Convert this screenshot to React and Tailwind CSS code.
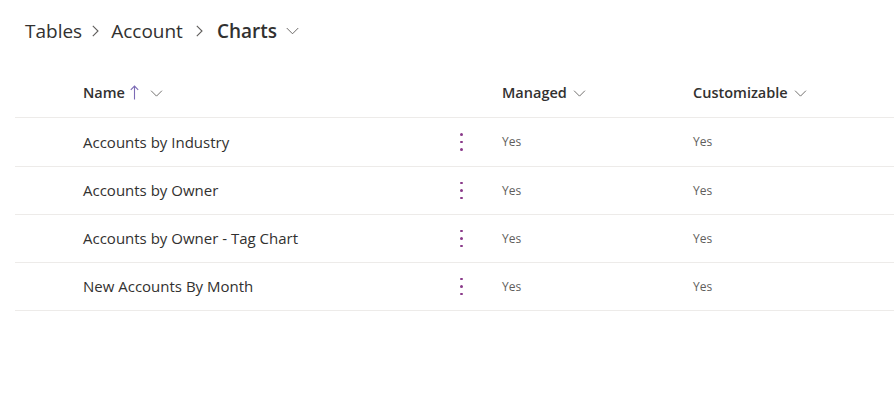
import React from 'react';

const rows = [
  'Accounts by Industry',
  'Accounts by Owner',
  'Accounts by Owner - Tag Chart',
  'New Accounts By Month',
];

const Chevron = ({ className = '' }) => (
  <svg viewBox="0 0 14 8" className={className} fill="none" stroke="currentColor" strokeWidth="1">
    <path d="M0.8 0.8 L7 7 L13.2 0.8" />
  </svg>
);

const ChevronRight = ({ className = '' }) => (
  <svg viewBox="0 0 7 12" className={className} fill="none" stroke="currentColor" strokeWidth="1.1">
    <path d="M0.8 0.8 L6 6 L0.8 11.2" />
  </svg>
);

const SortUp = () => (
  <svg viewBox="0 0 9 15" className="w-[9px] h-[15px] text-[#7c6bb5]" fill="none" stroke="currentColor" strokeWidth="1.1">
    <path d="M4.5 1 V14.5 M0.8 4.8 L4.5 1 L8.2 4.8" />
  </svg>
);

const MoreDots = () => (
  <div className="flex flex-col items-center w-[3px] gap-[5px]">
    <span className="w-[2.5px] h-[2.5px] bg-[#8a3a8a] rounded-full" />
    <span className="w-[2.5px] h-[2.5px] bg-[#8a3a8a] rounded-full" />
    <span className="w-[2.5px] h-[2.5px] bg-[#8a3a8a] rounded-full" />
  </div>
);

export default function App() {
  return (
    <div className="w-[894px] h-[401px] bg-white text-[#323130] font-['Segoe_UI','Open_Sans',sans-serif] overflow-hidden">
      {/* Breadcrumb */}
      <div className="flex items-center h-[40px] mt-[11px] pl-[25px] text-[19px] leading-none">
        <span>Tables</span>
        <ChevronRight className="w-[7px] h-[12px] ml-[10px] mr-[12px] text-[#605e5c]" />
        <span>Account</span>
        <ChevronRight className="w-[7px] h-[12px] ml-[13px] mr-[14px] text-[#605e5c]" />
        <span className="font-semibold">Charts</span>
        <Chevron className="w-[13px] h-[8px] ml-[9px] text-[#605e5c]" />
      </div>

      {/* Table */}
      <div className="ml-[15px] mt-[18px]">
        <div className="flex items-center h-[49px] border-b border-[#edebe9] text-[14.5px] font-semibold">
          <div className="w-[432px] pl-[68px] flex items-center">
            <span>Name</span>
            <span className="ml-[5px] mt-[-1px]">
              <SortUp />
            </span>
            <Chevron className="w-[13px] h-[7px] ml-[11px] text-[#605e5c]" />
          </div>
          <div className="w-[55px]" />
          <div className="w-[191px] flex items-center">
            <span>Managed</span>
            <Chevron className="w-[13px] h-[7px] ml-[6px] text-[#605e5c]" />
          </div>
          <div className="flex items-center">
            <span>Customizable</span>
            <Chevron className="w-[13px] h-[7px] ml-[6px] text-[#605e5c]" />
          </div>
        </div>
        {rows.map((name, i) => (
          <div
            key={name}
            className={`flex items-center ${i === 0 ? 'h-[49px]' : 'h-[48px]'} border-b border-[#edebe9]`}
          >
            <div className="w-[432px] pl-[68px] text-[15px]">{name}</div>
            <div className="w-[55px] pl-[13px]">
              <MoreDots />
            </div>
            <div className="w-[191px] text-[12px] text-[#605e5c]">Yes</div>
            <div className="text-[12px] text-[#605e5c]">Yes</div>
          </div>
        ))}
      </div>
    </div>
  );
}
